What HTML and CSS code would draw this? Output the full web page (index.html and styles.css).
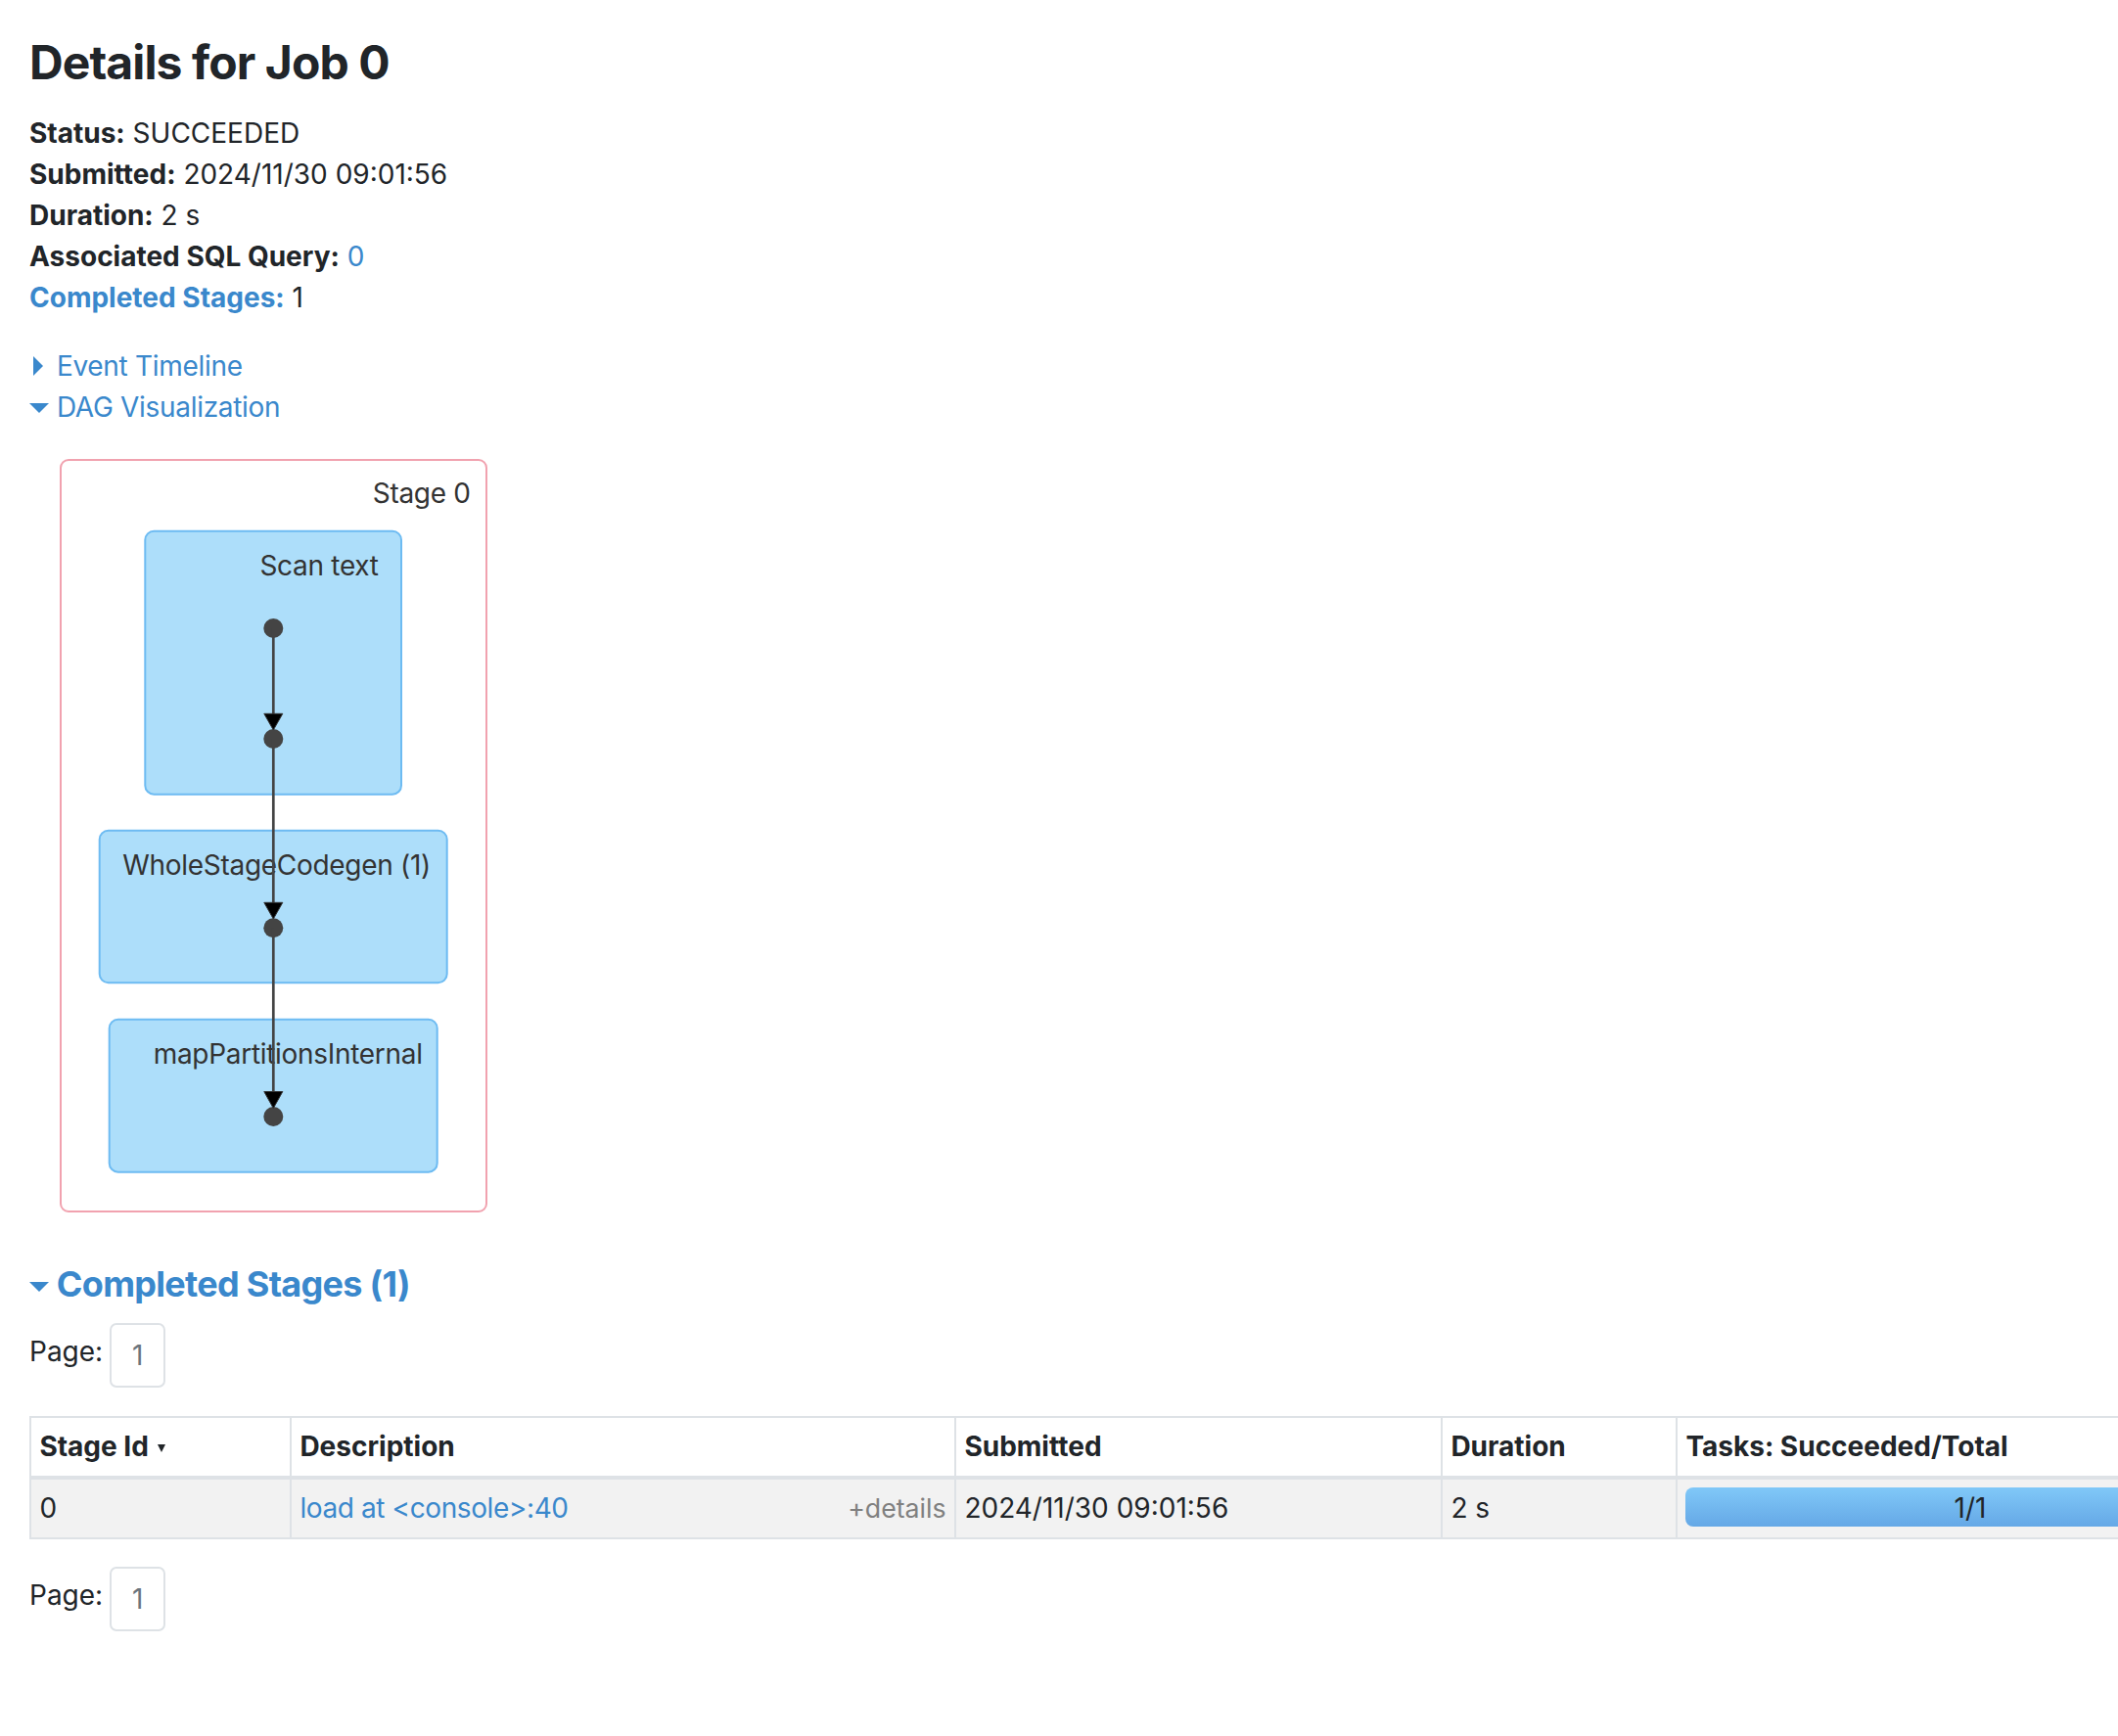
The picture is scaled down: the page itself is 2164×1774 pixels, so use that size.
FILE: index.html
```html
<!DOCTYPE html>
<html lang="en">
<head>
<meta charset="utf-8">
<title>Details for Job 0</title>
<link rel="stylesheet" href="styles.css">
</head>
<body>
<div class="page">
  <h3 class="title">Details for Job 0</h3>
  <ul class="summary">
    <li><strong>Status:</strong> SUCCEEDED</li>
    <li><strong>Submitted:</strong> 2024/11/30 09:01:56</li>
    <li><strong>Duration:</strong> 2 s</li>
    <li><strong>Associated SQL Query:</strong> <a href="#">0</a></li>
    <li><a href="#"><strong>Completed Stages:</strong></a> 1</li>
  </ul>
  <div class="toggle"><span class="arrow-closed"></span> <a href="#">Event Timeline</a></div>
  <div class="toggle"><span class="arrow-open"></span> <a href="#">DAG Visualization</a></div>
  <svg class="dag" width="520" height="810" viewBox="0 0 520 810" xmlns="http://www.w3.org/2000/svg">
    <rect class="dag-stage" x="32" y="33" width="435" height="768" rx="8" ry="8"/>
    <text class="dag-label" x="450.7" y="77" text-anchor="end">Stage 0</text>
    <rect class="dag-cluster" x="118.3" y="105.7" width="261.7" height="269" rx="9" ry="9"/>
    <text class="dag-label" x="356.7" y="150.7" text-anchor="end">Scan text</text>
    <rect class="dag-cluster" x="71.7" y="411.7" width="355" height="155.6" rx="9" ry="9"/>
    <text class="dag-label" x="410" y="457.3" text-anchor="end">WholeStageCodegen (1)</text>
    <rect class="dag-cluster" x="81.7" y="604.7" width="335" height="156" rx="9" ry="9"/>
    <text class="dag-label" x="401.7" y="649.7" text-anchor="end">mapPartitionsInternal</text>
    <circle class="dag-node" cx="249.3" cy="205" r="10"/>
    <circle class="dag-node" cx="249.3" cy="318" r="10"/>
    <circle class="dag-node" cx="249.3" cy="511.3" r="10"/>
    <circle class="dag-node" cx="249.3" cy="704" r="10"/>
    <line class="dag-edge" x1="249.3" y1="205" x2="249.3" y2="300"/>
    <line class="dag-edge" x1="249.3" y1="318" x2="249.3" y2="493"/>
    <line class="dag-edge" x1="249.3" y1="511.3" x2="249.3" y2="686"/>
    <polygon class="dag-arrow" points="239.8,292.3 258.8,292.3 249.3,309"/>
    <polygon class="dag-arrow" points="239.8,485.3 258.8,485.3 249.3,502"/>
    <polygon class="dag-arrow" points="239.8,678.5 258.8,678.5 249.3,695.5"/>
  </svg>
  <h4 class="section"><span class="arrow-open arrow-section"></span> <a href="#">Completed Stages (1)</a></h4>
  <div class="pager"><span class="pager-label">Page:</span><span class="page-box">1</span></div>
  <table class="stages">
    <colgroup>
      <col class="c-id"><col class="c-desc"><col class="c-sub"><col class="c-dur"><col class="c-tasks">
    </colgroup>
    <thead>
      <tr>
        <th>Stage Id <span class="sort"></span></th>
        <th>Description</th>
        <th>Submitted</th>
        <th>Duration</th>
        <th>Tasks: Succeeded/Total</th>
      </tr>
    </thead>
    <tbody>
      <tr>
        <td>0</td>
        <td><a href="#" class="desc-link">load at &lt;console&gt;:40</a><span class="details">+details</span></td>
        <td>2024/11/30 09:01:56</td>
        <td>2 s</td>
        <td><div class="progress"><span class="progress-text">1/1</span></div></td>
      </tr>
    </tbody>
  </table>
  <div class="pager pager-bottom"><span class="pager-label">Page:</span><span class="page-box">1</span></div>
</div>
</body>
</html>
```

FILE: styles.css
```css
html, body {
  margin: 0;
  padding: 0;
  background: #ffffff;
  overflow: hidden;
}

body {
  font-family: Inter, "Noto Sans", "Liberation Sans", sans-serif;
  font-size: 28px;
  line-height: 42px;
  color: #212529;
}

.page {
  padding: 35px 30px 0;
}

a {
  color: #3a88cc;
  text-decoration: none;
}

.title {
  font-size: 48px;
  line-height: 58px;
  font-weight: 700;
  letter-spacing: -0.9px;
  margin: 0 0 22px;
}

.summary {
  list-style: none;
  margin: 0 0 28px;
  padding: 0;
}

.summary strong {
  font-weight: 700;
}

.toggle a {
  letter-spacing: -0.3px;
}

.arrow-closed {
  display: inline-block;
  width: 0;
  height: 0;
  border-top: 10px solid transparent;
  border-bottom: 10px solid transparent;
  border-left: 10px solid #3a88cc;
  margin-left: 4px;
  margin-right: 6px;
}

.arrow-open {
  display: inline-block;
  width: 0;
  height: 0;
  border-left: 10px solid transparent;
  border-right: 10px solid transparent;
  border-top: 10px solid #3a88cc;
  margin-bottom: 4px;
}

.arrow-section {
  margin-bottom: 5px;
}

.dag {
  display: block;
}

.dag-stage {
  fill: #ffffff;
  stroke: #f1a2af;
  stroke-width: 2;
}

.dag-cluster {
  fill: #addefa;
  stroke: #6dbbf2;
  stroke-width: 2;
}

.dag-label {
  font-family: Inter, "Noto Sans", "Liberation Sans", sans-serif;
  font-size: 28px;
  letter-spacing: -0.3px;
  fill: #333333;
}

.dag-node {
  fill: #444444;
}

.dag-edge {
  stroke: #444444;
  stroke-width: 2.7;
}

.dag-arrow {
  fill: #000000;
  stroke: #333333;
  stroke-width: 1;
}

.section {
  font-size: 36px;
  line-height: 43px;
  font-weight: 700;
  letter-spacing: -0.7px;
  margin: 44px 0 0;
}

.pager {
  display: flex;
  align-items: flex-start;
  margin-top: 18px;
}

.pager-bottom {
  margin-top: 28px;
}

.pager-label {
  padding-top: 8px;
  padding-right: 7px;
}

.page-box {
  width: 57px;
  height: 66px;
  box-sizing: border-box;
  border: 2px solid #dee2e6;
  border-radius: 7px;
  padding: 14px 0;
  line-height: 35px;
  text-align: center;
  color: #6c757d;
}

.stages {
  border-collapse: collapse;
  table-layout: fixed;
  width: 2282px;
  margin-top: 29px;
}

.c-id { width: 266px; }
.c-desc { width: 679px; }
.c-sub { width: 497px; }
.c-dur { width: 240px; }
.c-tasks { width: 600px; }

.stages th,
.stages td {
  border: 2px solid #dee2e6;
  padding: 8.4px;
  text-align: left;
  vertical-align: top;
  white-space: nowrap;
  overflow: hidden;
}

.stages thead th {
  border-bottom-width: 4px;
  font-weight: 700;
}

.stages tbody tr {
  background: #f2f2f2;
}

.desc-link {
  letter-spacing: -0.4px;
}

.sort {
  display: inline-block;
  width: 0;
  height: 0;
  border-left: 4.5px solid transparent;
  border-right: 4.5px solid transparent;
  border-top: 8px solid #212529;
  margin-left: 2px;
  margin-bottom: 4px;
}

.details {
  float: right;
  color: #808080;
  font-size: 26.7px;
}

.progress {
  height: 40px;
  border-radius: 8px;
  background: linear-gradient(to bottom, #80c8f8, #65a8e6);
  text-align: center;
}

.progress-text {
  line-height: 40px;
  color: #212529;
}
```
